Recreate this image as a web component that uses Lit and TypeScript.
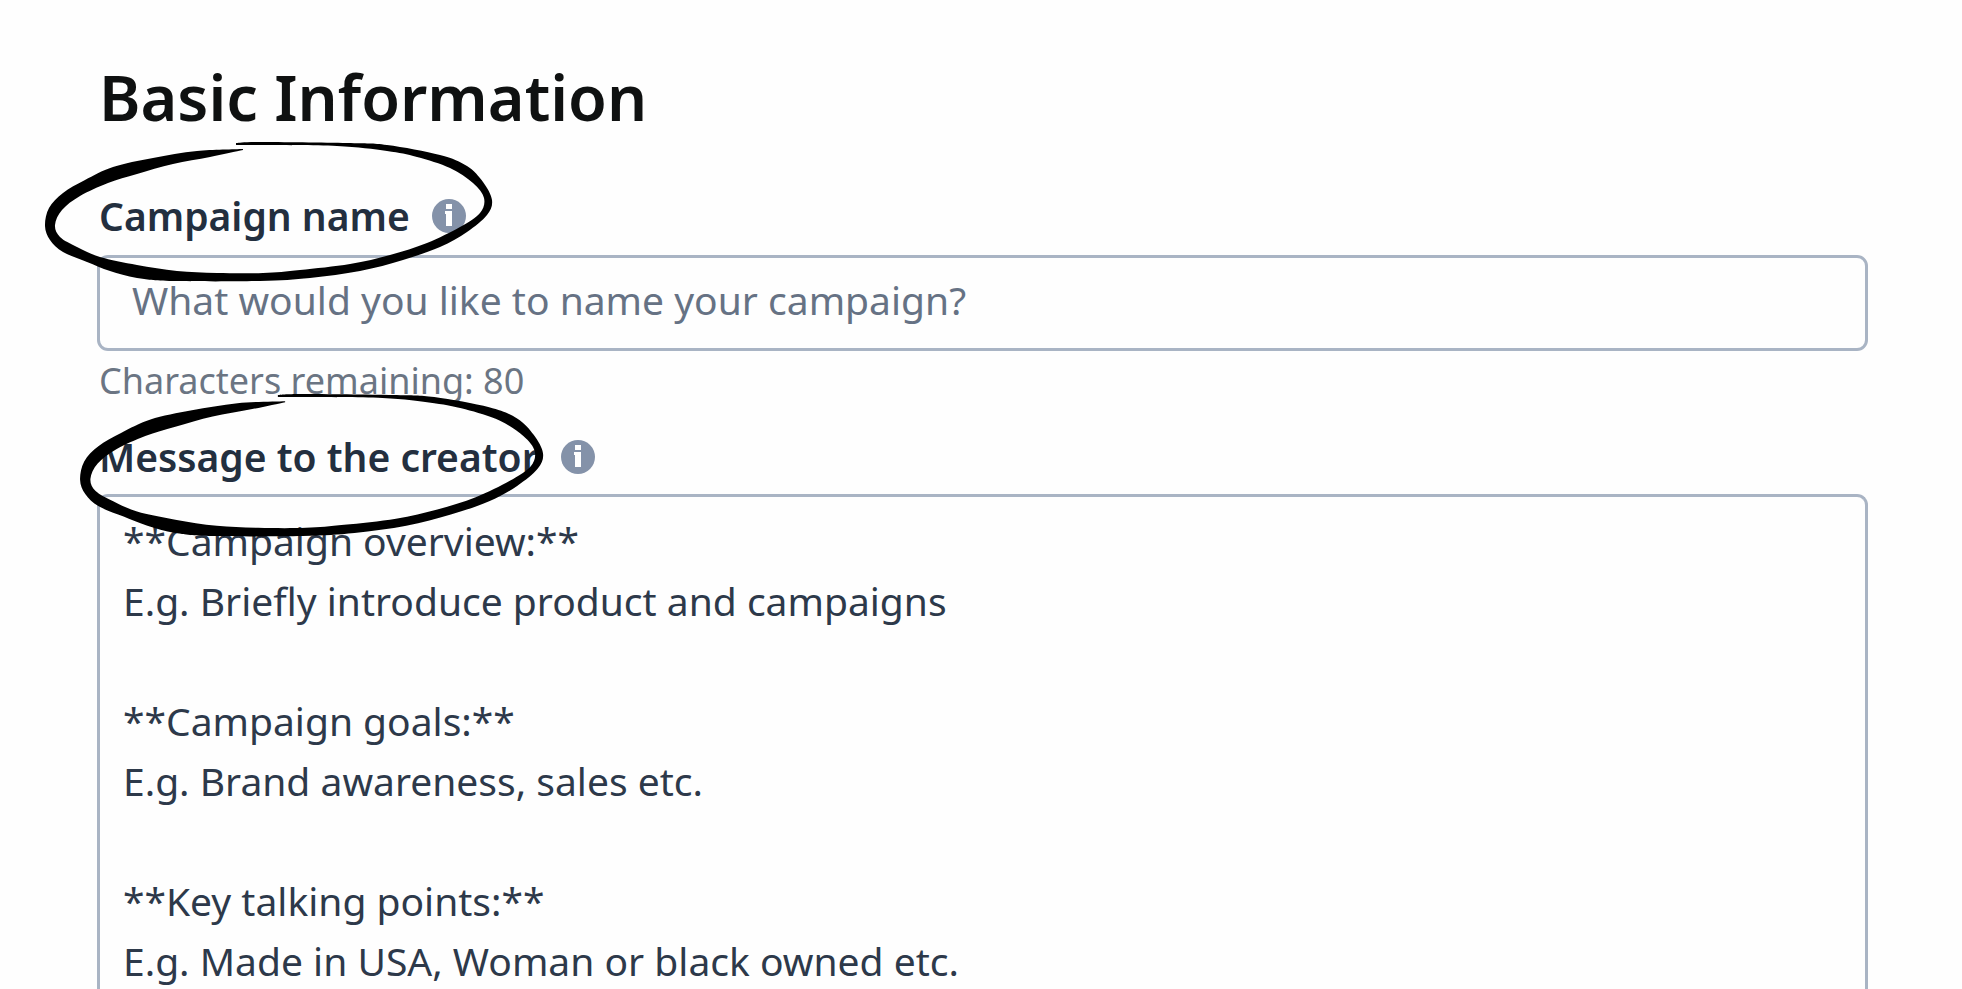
import { LitElement, html, css, svg } from "lit";
import { customElement, property } from "lit/decorators.js";

type Point = [number, number];

// The two edges of a hand-drawn pen loop; they meet in a sharp tip at each end.
const OUTER: Point[] = [
  [193, 1], [217, 0], [304, 1], [344, 3], [397, 13], [424, 24], [440, 40], [449, 58],
  [444, 73], [424, 90], [397, 105], [360, 118], [317, 129], [267, 136], [217, 139],
  [130, 139], [94, 136], [67, 129], [44, 120], [20, 110], [7, 98], [2, 84], [6, 66],
  [20, 51], [42, 38], [70, 25], [110, 16], [154, 9], [200, 7],
];
const INNER: Point[] = [
  [200, 8], [167, 15], [130, 22], [94, 32], [65, 41], [37, 54], [19, 68], [12, 83],
  [17, 95], [34, 105], [57, 115], [94, 123], [134, 129], [174, 131], [220, 131],
  [257, 128], [307, 122], [347, 113], [384, 101], [417, 85], [437, 71], [441, 56],
  [430, 41], [407, 26], [374, 15], [344, 9], [294, 4], [217, 3], [193, 3],
];

function curve(points: Point[]): string {
  const last = points.length - 1;
  const at = (i: number) => points[Math.max(0, Math.min(last, i))];
  let d = "";
  for (let i = 0; i < last; i++) {
    const [a, b, c, e] = [at(i - 1), at(i), at(i + 1), at(i + 2)];
    d += `C${b[0] + (c[0] - a[0]) / 6} ${b[1] + (c[1] - a[1]) / 6} ${c[0] - (e[0] - b[0]) / 6} ${c[1] - (e[1] - b[1]) / 6} ${c[0]} ${c[1]}`;
  }
  return d;
}

const LOOP_PATH = `M${OUTER[0].join(" ")}${curve(OUTER)}L${INNER[0].join(" ")}${curve(INNER)}Z`;

@customElement("pen-loop")
export class PenLoop extends LitElement {
  static styles = css`
    :host { display: block; pointer-events: none; }
    .loop { display: block; width: 100%; height: 100%; overflow: visible; }
  `;
  render() {
    return html`<svg class="loop" viewBox="0 0 449 139" preserveAspectRatio="none" aria-hidden="true">
      ${svg`<path d=${LOOP_PATH} fill="#000" />`}
    </svg>`;
  }
}

@customElement("info-button")
export class InfoButton extends LitElement {
  @property() label = "";
  static styles = css`
    :host { display: block; }
    .info { display: block; width: 34px; height: 34px; padding: 0; border: 0; background: none; cursor: pointer; }
    .glyph { display: block; width: 100%; height: 100%; }
  `;
  render() {
    return html`<button class="info" type="button" aria-label=${this.label}>
      <svg class="glyph" viewBox="0 0 34 34" aria-hidden="true">
        <circle cx="17" cy="17" r="17" fill="#8492a9" />
        <path d="M14 5h6v5h-6zM13 12h7v15h-6v-12h-1z" fill="#fff" />
      </svg>
    </button>`;
  }
}

@customElement("app-root")
export class AppRoot extends LitElement {
  static styles = css`
    :host {
      display: block;
      height: 100vh;
      overflow: hidden;
      background: #fefefe;
      font-family: "Noto Sans", "Open Sans", sans-serif;
      color: #232f3f;
    }
    .form {
      box-sizing: border-box;
      height: 100%;
      display: flex;
      flex-direction: column;
      padding: 57px 94px 0 97px;
    }
    .title { margin: 0 0 0 2px; font-size: 63px; line-height: 80px; font-weight: 600; color: #0f1111; }
    .row { position: relative; display: flex; align-items: center; gap: 22px; height: 60px; padding-left: 2px; }
    .name-row { margin: 49px 0 9px; }
    .message-row { margin: 16px 0 7px; }
    .label { font-size: 39px; line-height: 60px; font-weight: 600; }
    .loop { position: absolute; z-index: 1; }
    .name-loop { left: -54px; top: -44px; width: 449px; height: 139px; }
    .message-loop { left: -19px; top: -33px; width: 465px; height: 142px; }
    .box {
      box-sizing: border-box;
      display: block;
      width: 100%;
      margin: 0;
      border: 3px solid #a9b4c4;
      border-radius: 11px;
      background: #fefefe;
      font-family: inherit;
      font-size: 39px;
      line-height: 60px;
      color: #2d394a;
      outline: 0;
    }
    .name { height: 96px; padding: 0 32px 8px; }
    .name::placeholder { color: #667284; opacity: 1; }
    .hint { margin: 0 0 0 2px; font-size: 36px; line-height: 60px; color: #6b7583; }
    .message {
      flex: 1;
      min-height: 0;
      padding: 14px 23px 0;
      border-bottom: 0;
      border-bottom-left-radius: 0;
      border-bottom-right-radius: 0;
      resize: none;
      overflow: hidden;
    }
  `;

  private message = [
    "**Campaign overview:**",
    "E.g. Briefly introduce product and campaigns",
    "",
    "**Campaign goals:**",
    "E.g. Brand awareness, sales etc.",
    "",
    "**Key talking points:**",
    "E.g. Made in USA, Woman or black owned etc.",
  ].join("\n");

  render() {
    return html`<form class="form">
      <h1 class="title">Basic Information</h1>
      <div class="row name-row">
        <label class="label" for="name">Campaign name</label>
        <info-button label="About the campaign name"></info-button>
        <pen-loop class="loop name-loop"></pen-loop>
      </div>
      <input class="box name" id="name" type="text" maxlength="80" aria-describedby="remaining"
        placeholder="What would you like to name your campaign?" />
      <p class="hint" id="remaining">Characters remaining: 80</p>
      <div class="row message-row">
        <label class="label" for="message">Message to the creator</label>
        <info-button label="About the message"></info-button>
        <pen-loop class="loop message-loop"></pen-loop>
      </div>
      <textarea class="box message" id="message" .value=${this.message}></textarea>
    </form>`;
  }
}
